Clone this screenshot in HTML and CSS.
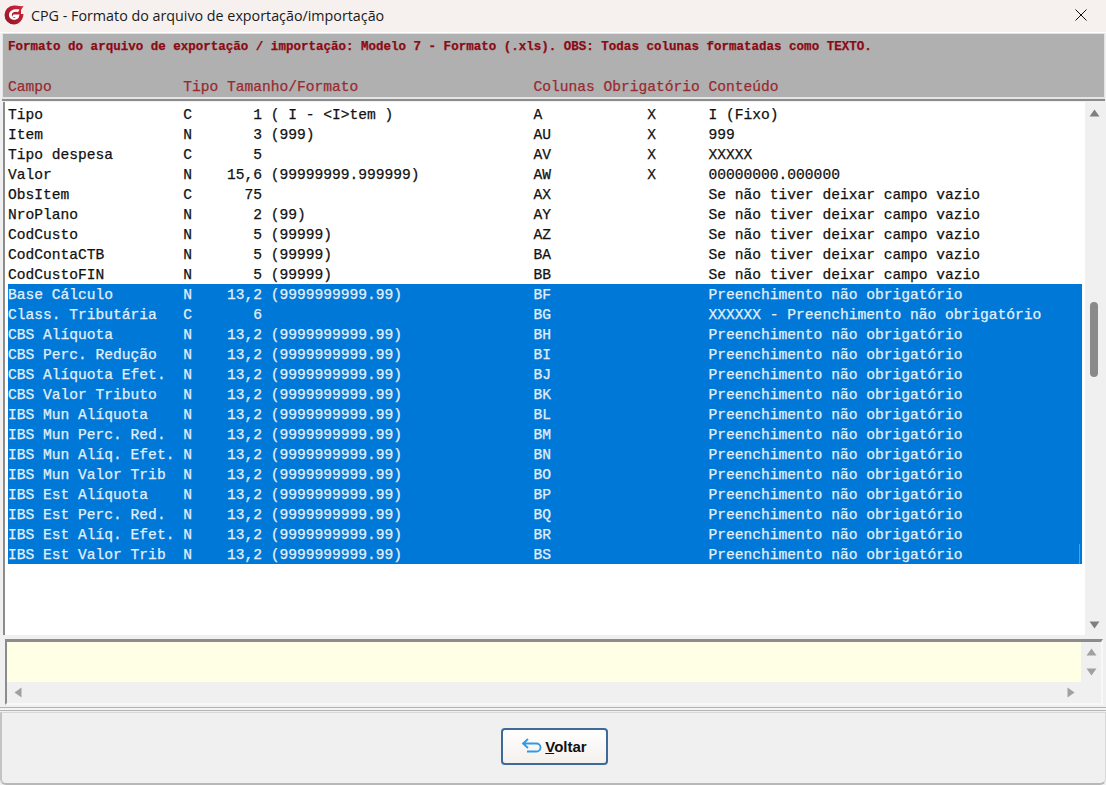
FILE: index.html
```html
<!DOCTYPE html>
<html lang="pt">
<head>
<meta charset="utf-8">
<title>CPG</title>
<link rel="stylesheet" href="styles.css">
</head>
<body>
<div class="window">
  <header class="titlebar">
    <svg class="logo" viewBox="0 0 20 20" width="20" height="20"><defs><linearGradient id="lg" x1="0" y1="1" x2="1" y2="0"><stop offset="0" stop-color="#8c1424"/><stop offset="1" stop-color="#d8263a"/></linearGradient></defs><path d="M10 0.5 C13 0.5 16 1.5 19.5 1 L17 5 V9 L19.5 9 C19 15 15 19.5 10 19.5 A9.5 9.5 0 0 1 10 0.5 Z" fill="url(#lg)"/><path d="M15.5 4.6 C11 3.2 5 5 5 10 C5 15 11.5 16.2 14.5 13 L15.5 9.6 H9.2 L8.2 12 H11.8 C10.5 13.4 7.8 12.6 7.8 10 C7.8 7 11.5 6.2 14 7.2 Z" fill="#fff"/></svg>
    <span class="title">CPG - Formato do arquivo de exportação/importação</span>
    <svg class="close" viewBox="0 0 12 12" width="12" height="12"><path d="M0.5 0.5 L11.5 11.5 M11.5 0.5 L0.5 11.5" stroke="#111" stroke-width="1" fill="none"/></svg>
  </header>
  <section class="head">
    <div class="head-title">Formato do arquivo de exportação / importação: Modelo 7 - Formato (.xls). OBS: Todas colunas formatadas como TEXTO.</div>
    <div class="row head-row"><span>Campo</span><span>Tipo</span><span class="c-tam">Tamanho/Formato</span><span>Colunas</span><span>Obrigatório</span><span>Conteúdo</span></div>
  </section>
  <section class="list">
    <div class="rows">
      <div class="row"><span>Tipo</span><span>C</span><span class="sz">1</span><span>( I - &lt;I&gt;tem )</span><span>A</span><span class="ob">X</span><span>I (Fixo)</span></div>
      <div class="row"><span>Item</span><span>N</span><span class="sz">3</span><span>(999)</span><span>AU</span><span class="ob">X</span><span>999</span></div>
      <div class="row"><span>Tipo despesa</span><span>C</span><span class="sz">5</span><span></span><span>AV</span><span class="ob">X</span><span>XXXXX</span></div>
      <div class="row"><span>Valor</span><span>N</span><span class="sz">15,6</span><span>(99999999.999999)</span><span>AW</span><span class="ob">X</span><span>00000000.000000</span></div>
      <div class="row"><span>ObsItem</span><span>C</span><span class="sz">75</span><span></span><span>AX</span><span class="ob"></span><span>Se não tiver deixar campo vazio</span></div>
      <div class="row"><span>NroPlano</span><span>N</span><span class="sz">2</span><span>(99)</span><span>AY</span><span class="ob"></span><span>Se não tiver deixar campo vazio</span></div>
      <div class="row"><span>CodCusto</span><span>N</span><span class="sz">5</span><span>(99999)</span><span>AZ</span><span class="ob"></span><span>Se não tiver deixar campo vazio</span></div>
      <div class="row"><span>CodContaCTB</span><span>N</span><span class="sz">5</span><span>(99999)</span><span>BA</span><span class="ob"></span><span>Se não tiver deixar campo vazio</span></div>
      <div class="row"><span>CodCustoFIN</span><span>N</span><span class="sz">5</span><span>(99999)</span><span>BB</span><span class="ob"></span><span>Se não tiver deixar campo vazio</span></div>
      <div class="selected">
        <div class="row"><span>Base Cálculo</span><span>N</span><span class="sz">13,2</span><span>(9999999999.99)</span><span>BF</span><span class="ob"></span><span>Preenchimento não obrigatório</span></div>
        <div class="row"><span>Class. Tributária</span><span>C</span><span class="sz">6</span><span></span><span>BG</span><span class="ob"></span><span>XXXXXX - Preenchimento não obrigatório</span></div>
        <div class="row"><span>CBS Alíquota</span><span>N</span><span class="sz">13,2</span><span>(9999999999.99)</span><span>BH</span><span class="ob"></span><span>Preenchimento não obrigatório</span></div>
        <div class="row"><span>CBS Perc. Redução</span><span>N</span><span class="sz">13,2</span><span>(9999999999.99)</span><span>BI</span><span class="ob"></span><span>Preenchimento não obrigatório</span></div>
        <div class="row"><span>CBS Alíquota Efet.</span><span>N</span><span class="sz">13,2</span><span>(9999999999.99)</span><span>BJ</span><span class="ob"></span><span>Preenchimento não obrigatório</span></div>
        <div class="row"><span>CBS Valor Tributo</span><span>N</span><span class="sz">13,2</span><span>(9999999999.99)</span><span>BK</span><span class="ob"></span><span>Preenchimento não obrigatório</span></div>
        <div class="row"><span>IBS Mun Alíquota</span><span>N</span><span class="sz">13,2</span><span>(9999999999.99)</span><span>BL</span><span class="ob"></span><span>Preenchimento não obrigatório</span></div>
        <div class="row"><span>IBS Mun Perc. Red.</span><span>N</span><span class="sz">13,2</span><span>(9999999999.99)</span><span>BM</span><span class="ob"></span><span>Preenchimento não obrigatório</span></div>
        <div class="row"><span>IBS Mun Alíq. Efet.</span><span>N</span><span class="sz">13,2</span><span>(9999999999.99)</span><span>BN</span><span class="ob"></span><span>Preenchimento não obrigatório</span></div>
        <div class="row"><span>IBS Mun Valor Trib</span><span>N</span><span class="sz">13,2</span><span>(9999999999.99)</span><span>BO</span><span class="ob"></span><span>Preenchimento não obrigatório</span></div>
        <div class="row"><span>IBS Est Alíquota</span><span>N</span><span class="sz">13,2</span><span>(9999999999.99)</span><span>BP</span><span class="ob"></span><span>Preenchimento não obrigatório</span></div>
        <div class="row"><span>IBS Est Perc. Red.</span><span>N</span><span class="sz">13,2</span><span>(9999999999.99)</span><span>BQ</span><span class="ob"></span><span>Preenchimento não obrigatório</span></div>
        <div class="row"><span>IBS Est Alíq. Efet.</span><span>N</span><span class="sz">13,2</span><span>(9999999999.99)</span><span>BR</span><span class="ob"></span><span>Preenchimento não obrigatório</span></div>
        <div class="row last"><span>IBS Est Valor Trib</span><span>N</span><span class="sz">13,2</span><span>(9999999999.99)</span><span>BS</span><span class="ob"></span><span>Preenchimento não obrigatório</span></div>
      </div>
    </div>
    <div class="vscroll">
      <svg class="arrow" viewBox="0 0 10 8" width="11" height="8"><path d="M5 0.5 L10 7.5 H0 Z"/></svg>
      <div class="track"><div class="thumb"></div></div>
      <svg class="arrow" viewBox="0 0 10 8" width="11" height="8"><path d="M0 0.5 H10 L5 7.5 Z"/></svg>
    </div>
  </section>
  <section class="memo">
    <div class="memo-main">
      <div class="memo-area"></div>
      <div class="hscroll">
        <svg class="arrow soft" viewBox="0 0 8 10" width="8" height="11"><path d="M0.5 5 L7.5 0 V10 Z"/></svg>
        <svg class="arrow soft" viewBox="0 0 8 10" width="8" height="11"><path d="M0.5 0 L7.5 5 L0.5 10 Z"/></svg>
      </div>
    </div>
    <div class="memo-side">
      <svg class="arrow soft" viewBox="0 0 10 8" width="11" height="8"><path d="M5 0.5 L10 7.5 H0 Z"/></svg>
      <svg class="arrow soft" viewBox="0 0 10 8" width="11" height="8"><path d="M0 0.5 H10 L5 7.5 Z"/></svg>
    </div>
  </section>
  <div class="rule"></div>
  <footer class="footer">
    <button class="btn" type="button">
      <svg viewBox="0 0 22 18" width="22" height="18"><path d="M7 2 L2 6.5 L7 11 M2.5 6.5 H15.5 A4 4 0 0 1 15.5 14.5 H6" fill="none" stroke="#2f9be8" stroke-width="1.8"/></svg>
      <span class="btn-label"><u>V</u>oltar</span>
    </button>
  </footer>
</div>
</body>
</html>
```
FILE: styles.css
```css
* { box-sizing: border-box; }
html, body { margin: 0; height: 100%; }
body { background: #f0f0f0; overflow: hidden; }
.window { width: 1106px; height: 785px; display: flex; flex-direction: column; background: #f0f0f0; }
.titlebar { height: 33px; flex: none; display: flex; align-items: center; padding: 0 19px 2px 4px; background: #f6f1ef; border-bottom: 1px solid #fff; }
.logo { flex: none; margin-right: 7px; }
.title { flex: 1; font: 14.3px "Segoe UI", "Open Sans", "Noto Sans", sans-serif; color: #1a1a1a; }
.close { flex: none; }
.head { height: 66px; flex: none; margin: 0 1px 0 2px; background: #b0b0b0; border: 1px solid #e4e4e4; border-bottom-width: 2px; box-shadow: 0 2px 0 #8c8c8c; padding: 3px 0 0 5px; }
.head-title { height: 39px; font: bold 12.53px/20px "Liberation Mono", monospace; color: #8c0a14; -webkit-text-stroke: 0.25px #8c0a14; }
.row { position: relative; display: grid; grid-template-columns: 20ch 5ch 4ch 1ch 30ch 8ch 12ch 1fr; height: 20px; white-space: pre; font: 14.6px/22px "Liberation Mono", monospace; -webkit-text-stroke: 0.25px currentColor; }
.row > .sz { text-align: right; grid-column: 3; }
.row > .sz + span { grid-column: 5; }
.head-row { color: #9a2a30; grid-template-columns: 20ch 5ch 35ch 8ch 12ch 1fr; }
.row > .ob { padding-left: 5ch; }
.list { height: 533px; flex: none; margin: 3px 3px 0 3px; display: flex; background: #fff; border-left: 2px solid #8c8c8c; }
.rows { flex: 1; padding: 2px 0 0 3px; color: #111; }
.selected { background: #0078d7; color: #e3f0fb; margin-right: 3px; }
.last::after { content: ""; position: absolute; right: 2px; top: 0; bottom: 0; width: 1px; background: #b08a5a; }
.vscroll { width: 18px; flex: none; background: #f0f0f0; display: flex; flex-direction: column; align-items: center; padding: 7px 0 6px; }
.track { flex: 1; width: 100%; padding-top: 185px; display: flex; justify-content: center; }
.thumb { width: 8px; height: 75px; border-radius: 4px; background: #8a8a8a; }
.arrow { fill: #808080; flex: none; display: block; }
.arrow.soft { fill: #a0a0a0; }
.memo { height: 66px; flex: none; margin: 4px 3px 0 5px; display: flex; border: 2px solid #f8f8f8; border-top: 3px solid #8c8c8c; border-left: 2px solid #8c8c8c; }
.memo-main { flex: 1; display: flex; flex-direction: column; }
.memo-area { height: 40px; background: #ffffe6; }
.hscroll { flex: 1; display: flex; justify-content: space-between; align-items: center; padding: 0 6px 0 7px; }
.memo-side { width: 20px; flex: none; display: flex; flex-direction: column; align-items: center; gap: 12px; padding-top: 6px; }
.rule { height: 4px; flex: none; margin-top: 2px; border-top: 1px solid #b4b4b4; border-bottom: 1px solid #b4b4b4; background: #f4f4f4; }
.footer { flex: 1; display: flex; justify-content: center; align-items: center; padding: 0 0 4px 1px; margin-top: 1px; border: 1px solid #d8d8d8; border-left: 2px solid #c4c4c4; border-bottom: 2px solid #b8b8b8; border-radius: 0 0 6px 6px; }
.btn { width: 107px; height: 37px; display: flex; align-items: center; justify-content: center; gap: 2px; padding: 0; background: linear-gradient(#ffffff, #f4f0ed); border: 2px solid #3d6a98; border-radius: 4px; font: bold 15px "Liberation Sans", Arial, sans-serif; color: #111; }
.btn-label { display: block; }
```
